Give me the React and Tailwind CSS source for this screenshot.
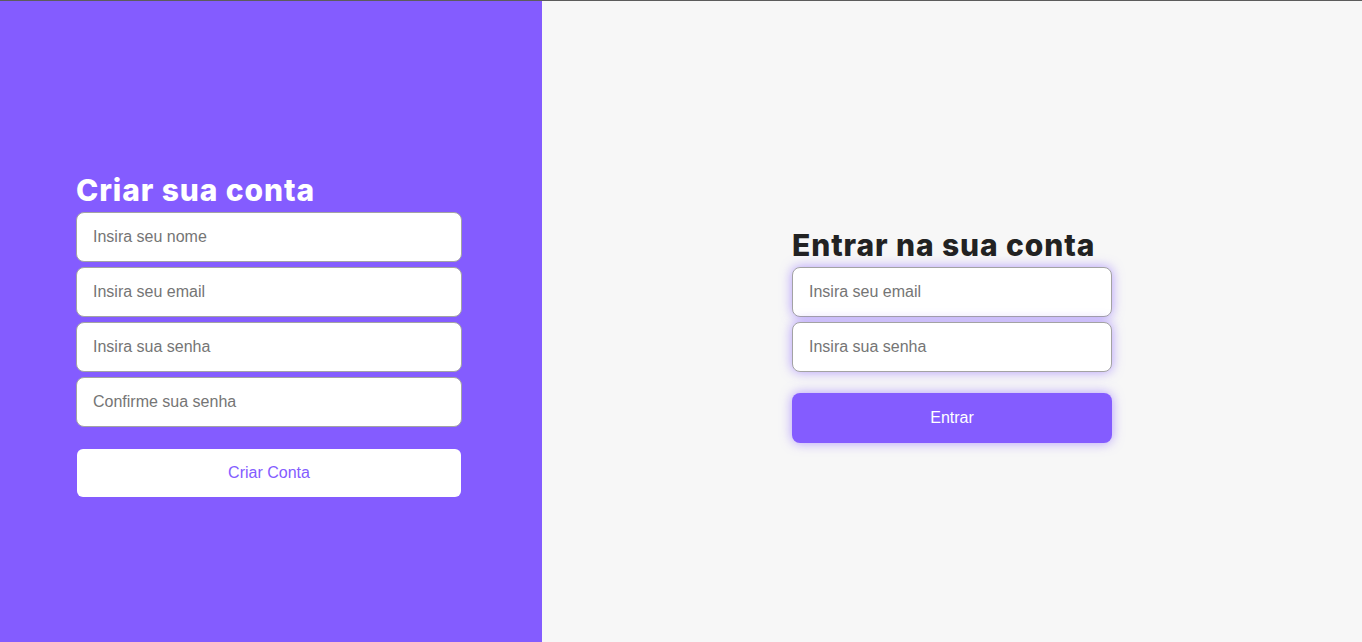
import React from 'react';

const inputCls =
  'w-full h-[50px] px-4 rounded-lg border border-[#a3a3a3] bg-white text-base text-[#333] placeholder:text-[#757575] outline-none';
const glow = 'shadow-[0_0_12px_rgba(132,92,255,0.6)]';

export default function App() {
  return (
    <div className="w-[1362px] h-[642px] flex border-t border-[#5c5c5c] font-['Liberation_Sans',Arial,sans-serif] overflow-hidden">
      {/* Criar conta */}
      <div className="w-[542px] shrink-0 bg-[#845cff] flex items-center pl-[76px] pt-[29px]">
        <form className="w-[386px] flex flex-col" onSubmit={(e) => e.preventDefault()}>
          <h1 className="font-['Inter',sans-serif] font-extrabold text-[30px] leading-[28px] pb-[8px] text-white tracking-[0.9px]">
            Criar sua conta
          </h1>
          <div className="flex flex-col gap-[5px]">
            <input className={inputCls} placeholder="Insira seu nome" />
            <input className={inputCls} placeholder="Insira seu email" />
            <input className={inputCls} type="password" placeholder="Insira sua senha" />
            <input className={inputCls} type="password" placeholder="Confirme sua senha" />
          </div>
          <button className="mt-[22px] mx-[1px] h-[48px] rounded-md bg-white text-[#845cff] text-base">
            Criar Conta
          </button>
        </form>
      </div>

      {/* Entrar */}
      <div className="flex-1 bg-[#f7f7f7] flex items-center justify-center pt-[31px]">
        <form className="w-[320px] flex flex-col" onSubmit={(e) => e.preventDefault()}>
          <h1 className="font-['Inter',sans-serif] font-extrabold text-[30px] leading-[28px] pb-[8px] text-[#222] tracking-[0.9px] whitespace-nowrap">
            Entrar na sua conta
          </h1>
          <div className="flex flex-col gap-[5px]">
            <input className={`${inputCls} ${glow}`} placeholder="Insira seu email" />
            <input className={`${inputCls} ${glow}`} type="password" placeholder="Insira sua senha" />
          </div>
          <button className={`mt-[21px] h-[50px] rounded-lg bg-[#845cff] text-white text-base ${glow}`}>
            Entrar
          </button>
        </form>
      </div>
    </div>
  );
}
